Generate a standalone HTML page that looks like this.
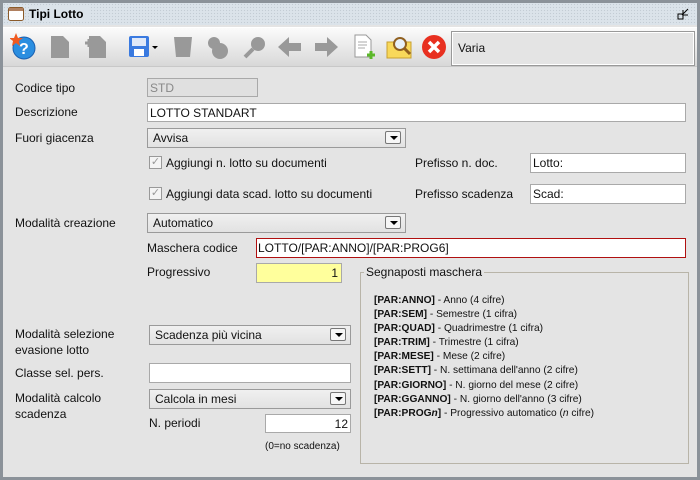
<!DOCTYPE html>
<html><head><meta charset="utf-8"><style>
*{box-sizing:border-box;margin:0;padding:0}
body{width:700px;height:480px;overflow:hidden;background:#8b9299;font-family:"Liberation Sans",sans-serif;font-size:12px;color:#111}
#win{position:absolute;left:3px;top:3px;width:694px;height:474px;background:#e4e4e4}
.title{position:absolute;left:0;top:0;width:694px;height:22px;background-color:#dbe3ea;background-image:radial-gradient(#c3ccd4 0.7px,transparent 0.8px);background-size:3px 3px}
.title span{position:absolute;left:26px;top:4px;font-weight:bold;font-size:12px;background:#dbe3ea;padding-right:6px;color:#000}
.tb{position:absolute;left:0;top:24px;width:694px;height:40px;background:linear-gradient(#fbfbfb,#e6e6e6 60%,#d8d8d8);border-top:1px solid #fff;border-bottom:1px solid #c8c8c8}
.a{position:absolute;white-space:nowrap}
.in{position:absolute;background:#fff;border:1px solid #a9a9a9;padding-left:2px;line-height:18px;white-space:nowrap}
.cb{position:absolute;background:linear-gradient(#f0f0f0,#e2e2e2);border:1px solid #9a9a9a;padding-left:5px;line-height:19px}
.cb i{position:absolute;right:4px;top:2px;width:16px;height:13px;border:1px solid #777;border-radius:2px;background:#f6f6f6}
.cb i:after{content:"";position:absolute;left:4px;top:4px;border-left:4px solid transparent;border-right:4px solid transparent;border-top:4px solid #000}
.ck{position:absolute;width:13px;height:13px;border:1px solid #999;background:#f4f4f4;color:#999;font-size:11px;line-height:11px;text-align:center}
.g{font-size:10.2px;position:absolute;left:371px;line-height:14.1px}
.g b{font-weight:bold}
.tb svg path,.tb svg circle{}
</style></head><body><div id="win">
<div class="title">
<svg class="a" style="left:5px;top:4px" width="16" height="14"><rect x="0.5" y="0.5" width="15" height="13" rx="2" fill="#fff" stroke="#8a5a2a"/><rect x="1" y="1" width="14" height="3" fill="#b08060"/></svg>
<span>Tipi Lotto</span>
<svg class="a" style="left:674px;top:5px" width="12" height="12"><rect x="1" y="6" width="5" height="5" fill="none" stroke="#000"/><path d="M5 7L11 1M6 2v5h5" fill="none" stroke="#000"/></svg>
</div>
<div class="tb">
<svg class="a" style="left:7px;top:4px" width="26" height="28"><circle cx="14" cy="16" r="11" fill="#2a8ee0" stroke="#1a60b0"/><text x="9" y="22" font-size="16" font-weight="bold" fill="#fff" font-family="Liberation Sans">?</text><polygon points="6,1 8,6 13,6 9,9 10,14 6,11 2,14 3,9 -1,6 4,6" fill="#f05a20"/></svg>
<svg class="a" style="left:47px;top:7px" width="20" height="24"><path d="M1 1h12l6 6v16H1z" fill="#999"/></svg>
<svg class="a" style="left:82px;top:7px" width="22" height="24"><path d="M4 1h11l6 6v16H4z" fill="#999"/><path d="M0 8h8M4 4v8" stroke="#999" stroke-width="3"/></svg>
<svg class="a" style="left:125px;top:7px" width="30" height="24"><rect x="1" y="1" width="20" height="21" rx="2" fill="#3a7ae0"/><rect x="4" y="3" width="14" height="8" fill="#dfe8f8"/><rect x="6" y="14" width="10" height="7" fill="#fff"/><path d="M24 11h6l-3 3z" fill="#000"/></svg>
<svg class="a" style="left:170px;top:7px" width="20" height="24"><path d="M1 2h18l-2 20H3z" fill="#999"/></svg>
<svg class="a" style="left:203px;top:7px" width="24" height="24"><circle cx="8" cy="8" r="6" fill="#999"/><circle cx="14" cy="16" r="8" fill="#999"/></svg>
<svg class="a" style="left:240px;top:7px" width="24" height="24"><circle cx="15" cy="9" r="7" fill="#999"/><path d="M10 14L2 22" stroke="#999" stroke-width="4"/></svg>
<svg class="a" style="left:275px;top:9px" width="24" height="20"><path d="M0 10L11 0v6h12v8H11v6z" fill="#999"/></svg>
<svg class="a" style="left:311px;top:9px" width="24" height="20"><path d="M24 10L13 0v6H1v8h12v6z" fill="#999"/></svg>
<svg class="a" style="left:350px;top:6px" width="24" height="26"><path d="M2 1h11l5 5v17H2z" fill="#fff" stroke="#999"/><path d="M5 8h9M5 11h9M5 14h7" stroke="#aaa"/><path d="M14 21h8M18 17v8" stroke="#5cb82a" stroke-width="3"/></svg>
<svg class="a" style="left:383px;top:6px" width="28" height="26"><path d="M1 8h24v16H1z" fill="#f8d85a" stroke="#c8a030"/><circle cx="14" cy="10" r="6" fill="#e8f0f8" stroke="#906020" stroke-width="2"/><path d="M18 14l6 6" stroke="#906020" stroke-width="3"/></svg>
<svg class="a" style="left:418px;top:6px" width="26" height="26"><circle cx="13" cy="13" r="12" fill="#e83020"/><path d="M8 8l10 10M18 8L8 18" stroke="#fff" stroke-width="3.5"/></svg>
<div class="a" style="left:448px;top:3px;width:244px;height:35px;border:1px solid #999;background:#e4e4e4;box-shadow:inset 0 0 0 1px #fff"><span class="a" style="left:6px;top:9px">Varia</span></div>
</div>

<div class="a" style="left:12px;top:78px">Codice tipo</div>
<div class="in" style="left:144px;top:75px;width:111px;height:19px;background:#e0e0e0;color:#888">STD</div>
<div class="a" style="left:12px;top:102px">Descrizione</div>
<div class="in" style="left:144px;top:100px;width:539px;height:19px">LOTTO STANDART</div>
<div class="a" style="left:12px;top:128px">Fuori giacenza</div>
<div class="cb" style="left:144px;top:125px;width:259px;height:20px">Avvisa<i></i></div>
<div class="ck" style="left:146px;top:153px">✓</div><div class="a" style="left:163px;top:153px">Aggiungi n. lotto su documenti</div>
<div class="a" style="left:412px;top:153px">Prefisso n. doc.</div>
<div class="in" style="left:527px;top:150px;width:156px;height:20px">Lotto:</div>
<div class="ck" style="left:146px;top:184px">✓</div><div class="a" style="left:163px;top:184px">Aggiungi data scad. lotto su documenti</div>
<div class="a" style="left:412px;top:184px">Prefisso scadenza</div>
<div class="in" style="left:527px;top:181px;width:156px;height:20px">Scad:</div>
<div class="a" style="left:12px;top:213px">Modalità creazione</div>
<div class="cb" style="left:144px;top:210px;width:259px;height:20px">Automatico<i></i></div>
<div class="a" style="left:144px;top:238px">Maschera codice</div>
<div class="in" style="left:253px;top:235px;width:430px;height:20px;border-color:#b01010;padding-left:1px">LOTTO/[PAR:ANNO]/[PAR:PROG6]</div>
<div class="a" style="left:144px;top:262px">Progressivo</div>
<div class="in" style="left:253px;top:260px;width:86px;height:20px;background:#ffff9c;text-align:right;padding-right:3px">1</div>
<div class="a" style="left:357px;top:269px;width:329px;height:192px;border:1px solid #b8b4a8"></div>
<div class="a" style="left:361px;top:262px;background:#e4e4e4;padding:0 2px">Segnaposti maschera</div>
<div class="g" style="top:291px"><b>[PAR:ANNO]</b> - Anno (4 cifre)<br><b>[PAR:SEM]</b> - Semestre (1 cifra)<br><b>[PAR:QUAD]</b> - Quadrimestre (1 cifra)<br><b>[PAR:TRIM]</b> - Trimestre (1 cifra)<br><b>[PAR:MESE]</b> - Mese (2 cifre)<br><b>[PAR:SETT]</b> - N. settimana dell'anno (2 cifre)<br><b>[PAR:GIORNO]</b> - N. giorno del mese (2 cifre)<br><b>[PAR:GGANNO]</b> - N. giorno dell'anno (3 cifre)<br><b>[PAR:PROG<i>n</i>]</b> - Progressivo automatico (<i>n</i> cifre)</div>
<div class="a" style="left:12px;top:323px;line-height:16px">Modalità selezione<br>evasione lotto</div>
<div class="cb" style="left:146px;top:322px;width:202px;height:20px">Scadenza più vicina<i></i></div>
<div class="a" style="left:12px;top:363px">Classe sel. pers.</div>
<div class="in" style="left:146px;top:360px;width:202px;height:20px"></div>
<div class="a" style="left:12px;top:387px;line-height:16px">Modalità calcolo<br>scadenza</div>
<div class="cb" style="left:146px;top:386px;width:202px;height:20px">Calcola in mesi<i></i></div>
<div class="a" style="left:146px;top:413px">N. periodi</div>
<div class="in" style="left:262px;top:411px;width:86px;height:19px;text-align:right;padding-right:2px">12</div>
<div class="a" style="left:262px;top:438px;font-size:10px">(0=no scadenza)</div>
</div></body></html>
